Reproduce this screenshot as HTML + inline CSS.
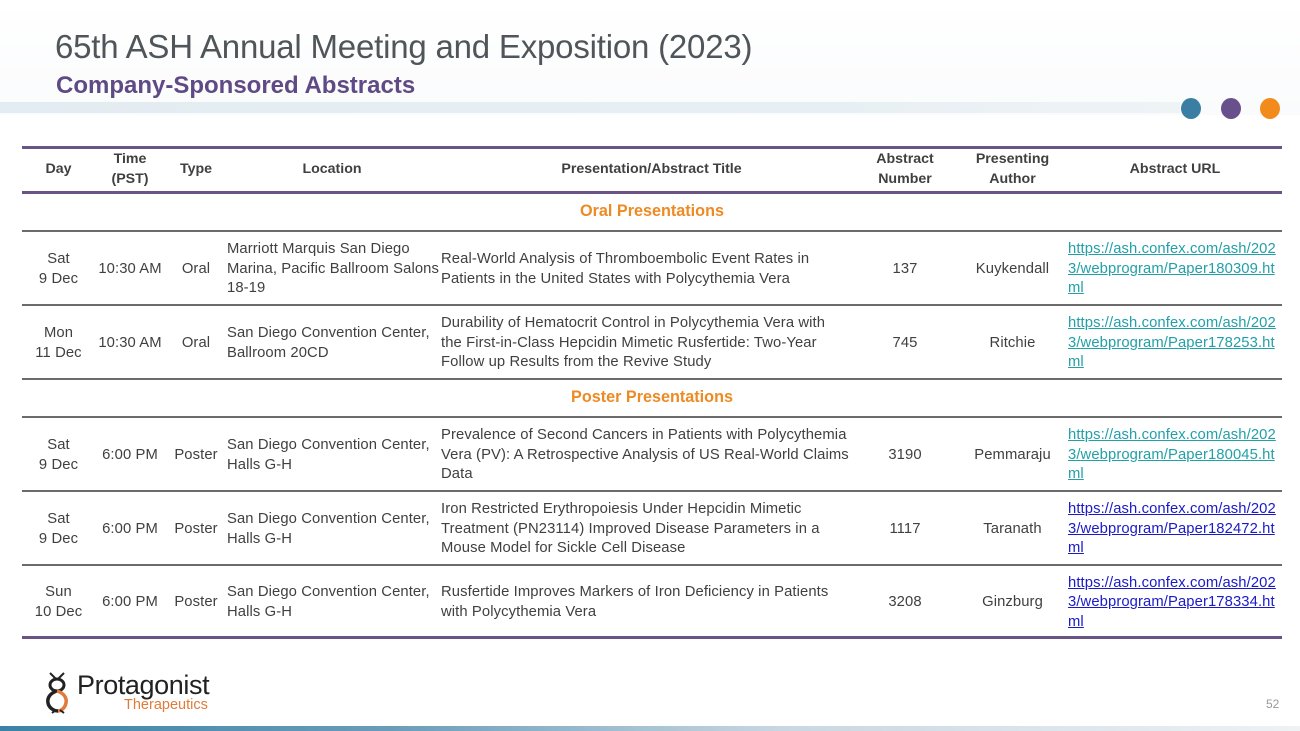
<!DOCTYPE html>
<html><head><meta charset="utf-8"><style>
*{margin:0;padding:0;box-sizing:border-box}
body{width:1300px;height:731px;position:relative;overflow:hidden;background:#fff;font-family:"Liberation Sans",sans-serif;color:#404040}
.a{position:absolute}
.c{position:absolute;display:flex;align-items:center;font-size:14.8px;line-height:19.6px;white-space:nowrap;letter-spacing:0.1px;padding-top:3px}
.ctr{justify-content:center;text-align:center}
.hd{font-weight:bold;color:#404040;font-size:14.2px;letter-spacing:0;padding-top:0}
.ln{position:absolute;left:22px;width:1260px;height:2px;background:#6b6b6b}
.pl{position:absolute;left:22px;width:1260px;height:3px;background:#6a5486}
.sec{position:absolute;left:22px;width:1260px;text-align:center;font-weight:bold;color:#ee8a23;font-size:16.2px}
a{color:#22a0a8;text-decoration:underline}
a.b{color:#1a1ac8}
</style></head><body>
<div class="a" style="left:0;top:0;width:1300px;height:115px;background:linear-gradient(#fff,#fafbfc)"></div>
<div class="a" style="left:0;top:102px;width:1180px;height:11px;background:linear-gradient(90deg,#e3ecf2,#e8eff4 70%,#eef3f6)"></div>
<div class="a" style="left:55px;top:28px;font-size:33px;color:#50555a;letter-spacing:-0.2px">65th ASH Annual Meeting and Exposition (2023)</div>
<div class="a" style="left:56px;top:72px;font-size:24px;font-weight:bold;color:#5f4a85">Company-Sponsored Abstracts</div>
<div class="a" style="left:1181px;top:98px;width:20px;height:21px;border-radius:50%;background:#3a7fa3"></div>
<div class="a" style="left:1221px;top:98px;width:20px;height:21px;border-radius:50%;background:#68508c"></div>
<div class="a" style="left:1260px;top:98px;width:20px;height:21px;border-radius:50%;background:#f28b1b"></div>

<div class="pl" style="top:146px"></div>
<div class="pl" style="top:191px"></div>
<div class="c ctr hd" style="left:22px;width:73px;top:149px;height:42px">Day</div>
<div class="c ctr hd" style="left:95px;width:70px;top:149px;height:42px">Time<br>(PST)</div>
<div class="c ctr hd" style="left:165px;width:62px;top:149px;height:42px">Type</div>
<div class="c ctr hd" style="left:227px;width:210px;top:149px;height:42px">Location</div>
<div class="c ctr hd" style="left:439px;width:425px;top:149px;height:42px">Presentation/Abstract Title</div>
<div class="c ctr hd" style="left:860px;width:90px;top:149px;height:42px">Abstract<br>Number</div>
<div class="c ctr hd" style="left:960px;width:105px;top:149px;height:42px">Presenting<br>Author</div>
<div class="c ctr hd" style="left:1066px;width:218px;top:149px;height:42px">Abstract URL</div>

<div class="sec" style="top:202px">Oral Presentations</div>
<div class="ln" style="top:230px"></div>

<div class="c ctr" style="left:22px;width:73px;top:232px;height:72px">Sat<br>9 Dec</div>
<div class="c ctr" style="left:95px;width:70px;top:232px;height:72px">10:30 AM</div>
<div class="c ctr" style="left:165px;width:62px;top:232px;height:72px">Oral</div>
<div class="c" style="left:227px;top:232px;height:72px">Marriott Marquis San Diego<br>Marina, Pacific Ballroom Salons<br>18-19</div>
<div class="c" style="left:441px;top:232px;height:72px">Real-World Analysis of Thromboembolic Event Rates in<br>Patients in the United States with Polycythemia Vera</div>
<div class="c ctr" style="left:860px;width:90px;top:232px;height:72px">137</div>
<div class="c ctr" style="left:960px;width:105px;top:232px;height:72px">Kuykendall</div>
<div class="c" style="left:1068px;top:232px;height:72px"><span><a>https://ash.confex.com/ash/202</a><br><a>3/webprogram/Paper180309.ht</a><br><a>ml</a></span></div>
<div class="ln" style="top:304px"></div>

<div class="c ctr" style="left:22px;width:73px;top:306px;height:72px">Mon<br>11 Dec</div>
<div class="c ctr" style="left:95px;width:70px;top:306px;height:72px">10:30 AM</div>
<div class="c ctr" style="left:165px;width:62px;top:306px;height:72px">Oral</div>
<div class="c" style="left:227px;top:306px;height:72px">San Diego Convention Center,<br>Ballroom 20CD</div>
<div class="c" style="left:441px;top:306px;height:72px">Durability of Hematocrit Control in Polycythemia Vera with<br>the First-in-Class Hepcidin Mimetic Rusfertide: Two-Year<br>Follow up Results from the Revive Study</div>
<div class="c ctr" style="left:860px;width:90px;top:306px;height:72px">745</div>
<div class="c ctr" style="left:960px;width:105px;top:306px;height:72px">Ritchie</div>
<div class="c" style="left:1068px;top:306px;height:72px"><span><a>https://ash.confex.com/ash/202</a><br><a>3/webprogram/Paper178253.ht</a><br><a>ml</a></span></div>
<div class="ln" style="top:378px"></div>

<div class="sec" style="top:388px">Poster Presentations</div>
<div class="ln" style="top:416px"></div>

<div class="c ctr" style="left:22px;width:73px;top:418px;height:72px">Sat<br>9 Dec</div>
<div class="c ctr" style="left:95px;width:70px;top:418px;height:72px">6:00 PM</div>
<div class="c ctr" style="left:165px;width:62px;top:418px;height:72px">Poster</div>
<div class="c" style="left:227px;top:418px;height:72px">San Diego Convention Center,<br>Halls G-H</div>
<div class="c" style="left:441px;top:418px;height:72px">Prevalence of Second Cancers in Patients with Polycythemia<br>Vera (PV): A Retrospective Analysis of US Real-World Claims<br>Data</div>
<div class="c ctr" style="left:860px;width:90px;top:418px;height:72px">3190</div>
<div class="c ctr" style="left:960px;width:105px;top:418px;height:72px">Pemmaraju</div>
<div class="c" style="left:1068px;top:418px;height:72px"><span><a>https://ash.confex.com/ash/202</a><br><a>3/webprogram/Paper180045.ht</a><br><a>ml</a></span></div>
<div class="ln" style="top:490px"></div>

<div class="c ctr" style="left:22px;width:73px;top:492px;height:72px">Sat<br>9 Dec</div>
<div class="c ctr" style="left:95px;width:70px;top:492px;height:72px">6:00 PM</div>
<div class="c ctr" style="left:165px;width:62px;top:492px;height:72px">Poster</div>
<div class="c" style="left:227px;top:492px;height:72px">San Diego Convention Center,<br>Halls G-H</div>
<div class="c" style="left:441px;top:492px;height:72px">Iron Restricted Erythropoiesis Under Hepcidin Mimetic<br>Treatment (PN23114) Improved Disease Parameters in a<br>Mouse Model for Sickle Cell Disease</div>
<div class="c ctr" style="left:860px;width:90px;top:492px;height:72px">1117</div>
<div class="c ctr" style="left:960px;width:105px;top:492px;height:72px">Taranath</div>
<div class="c" style="left:1068px;top:492px;height:72px"><span><a class="b">https://ash.confex.com/ash/202</a><br><a class="b">3/webprogram/Paper182472.ht</a><br><a class="b">ml</a></span></div>
<div class="ln" style="top:564px"></div>

<div class="c ctr" style="left:22px;width:73px;top:566px;height:71px">Sun<br>10 Dec</div>
<div class="c ctr" style="left:95px;width:70px;top:566px;height:71px">6:00 PM</div>
<div class="c ctr" style="left:165px;width:62px;top:566px;height:71px">Poster</div>
<div class="c" style="left:227px;top:566px;height:71px">San Diego Convention Center,<br>Halls G-H</div>
<div class="c" style="left:441px;top:566px;height:71px">Rusfertide Improves Markers of Iron Deficiency in Patients<br>with Polycythemia Vera</div>
<div class="c ctr" style="left:860px;width:90px;top:566px;height:71px">3208</div>
<div class="c ctr" style="left:960px;width:105px;top:566px;height:71px">Ginzburg</div>
<div class="c" style="left:1068px;top:566px;height:71px"><span><a class="b">https://ash.confex.com/ash/202</a><br><a class="b">3/webprogram/Paper178334.ht</a><br><a class="b">ml</a></span></div>
<div class="pl" style="top:636px"></div>

<svg class="a" style="left:42px;top:671px" width="34" height="44" viewBox="0 0 34 44">
<path d="M8 2 L14 8 M22 2 L16 8" stroke="#222" stroke-width="2" fill="none"/>
<ellipse cx="15" cy="14" rx="7" ry="6" fill="none" stroke="#222" stroke-width="3"/>
<path d="M15 20 C8 22 5 27 6 32 C7 37 12 40 16 40" fill="none" stroke="#222" stroke-width="3.5"/>
<path d="M15 20 C22 22 25 27 24 32 C23 37 19 40 16 40" fill="none" stroke="#e07b39" stroke-width="3.5"/>
<path d="M10 42 L14 39 M22 42 L18 39" stroke="#222" stroke-width="2" fill="none"/>
</svg>
<div class="a" style="left:77px;top:670px;font-size:27px;color:#222;letter-spacing:-0.4px">Protagonist</div>
<div class="a" style="left:124px;top:697px;font-size:14.5px;color:#e07b39;line-height:16px">Therapeutics</div>
<div class="a" style="left:1266px;top:697px;font-size:12px;color:#999">52</div>
<div class="a" style="left:0;top:726px;width:1300px;height:5px;background:linear-gradient(90deg,#3a83a6,#6a9cb8 30%,#c8d7e2 60%,#eef2f5)"></div>
</body></html>
